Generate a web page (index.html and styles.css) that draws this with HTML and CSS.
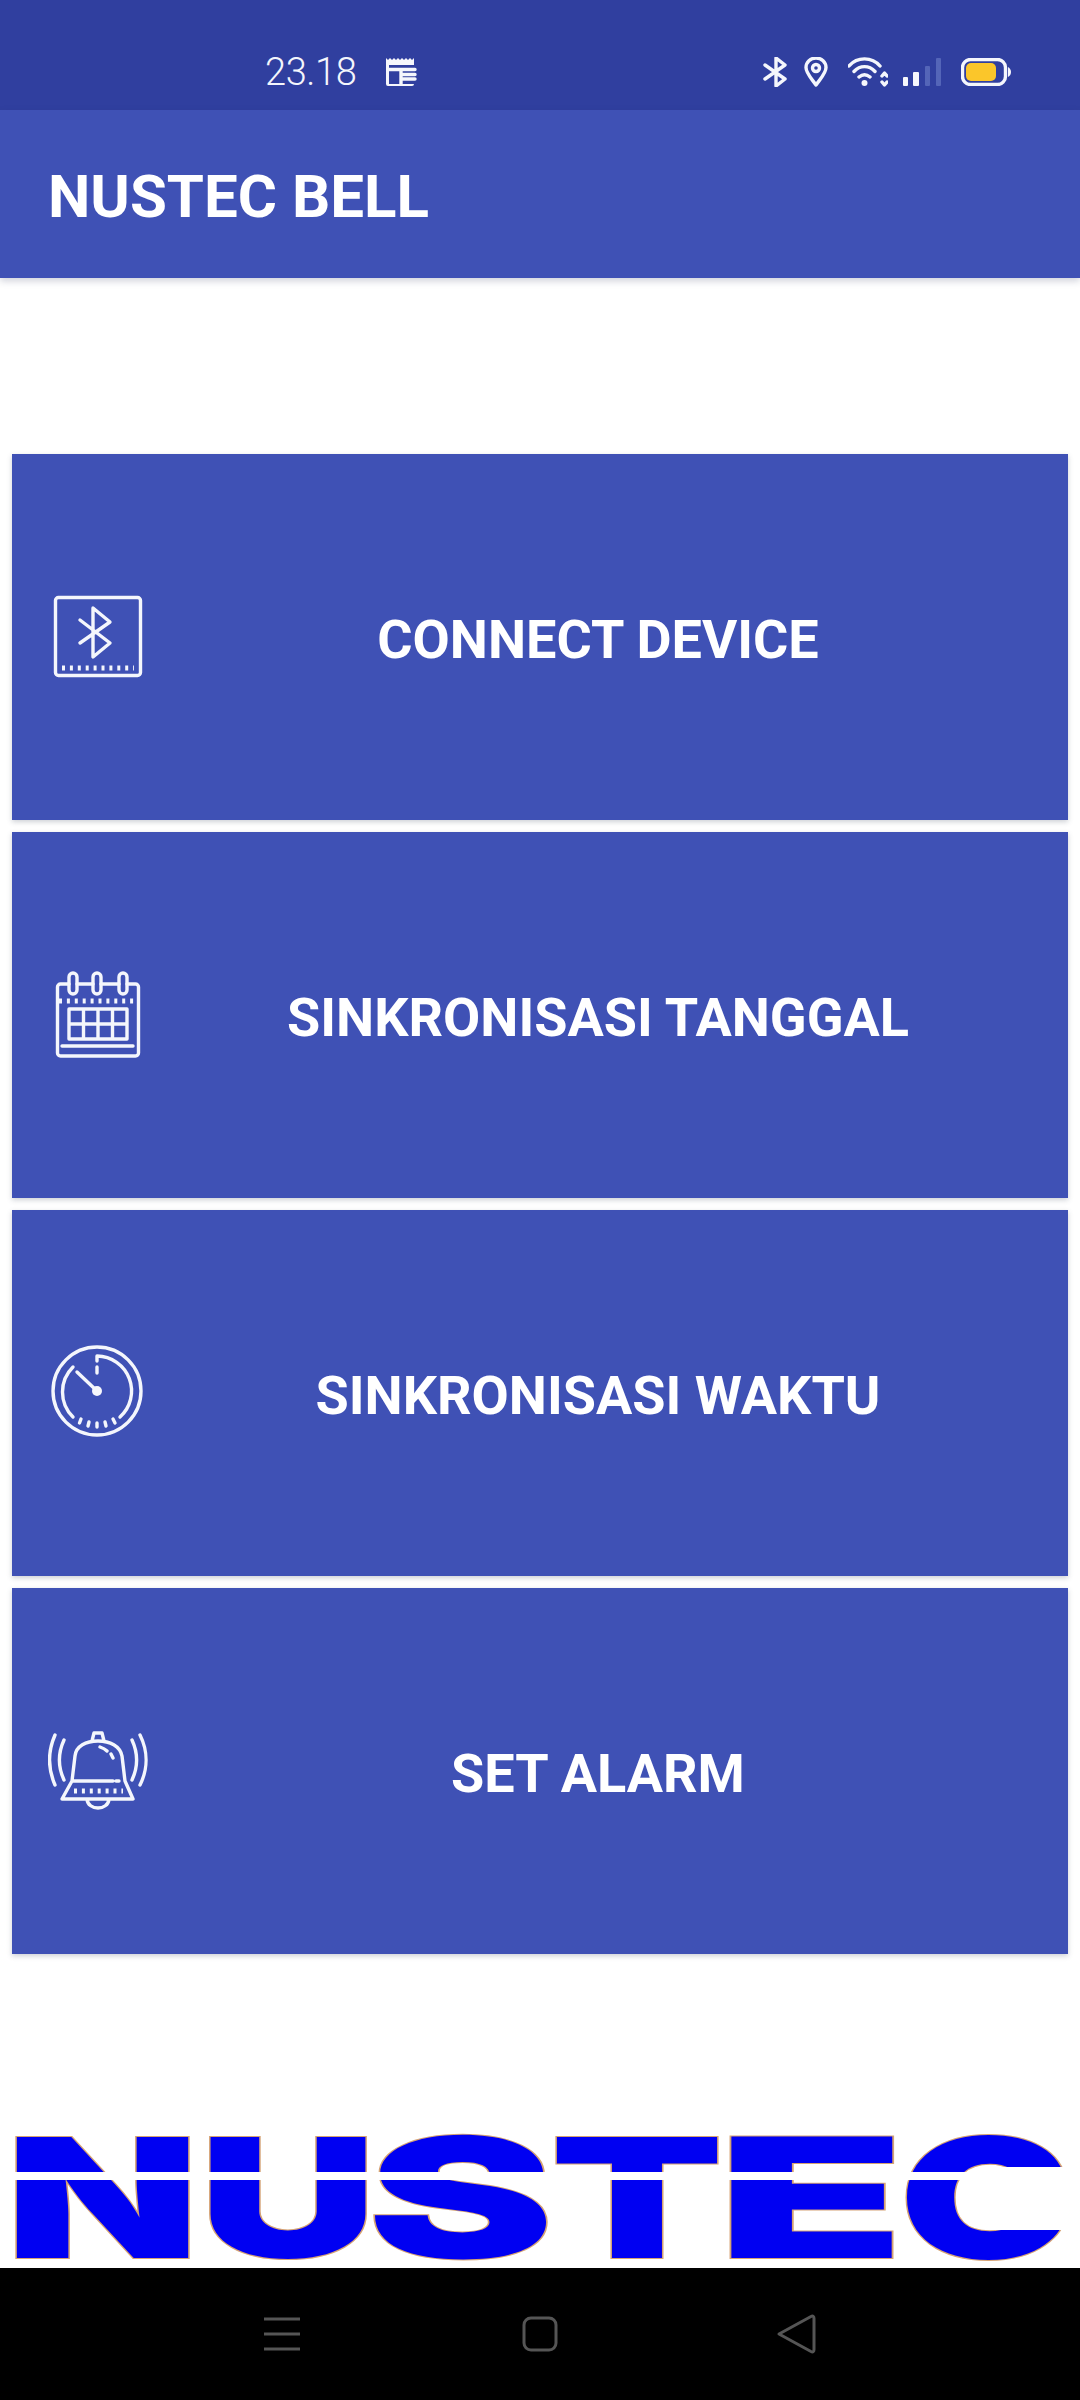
FILE: index.html
```html
<!DOCTYPE html>
<html lang="id">
<head>
<meta charset="utf-8">
<title>NUSTEC BELL</title>
<link rel="stylesheet" href="styles.css">
</head>
<body>
<div class="screen">
  <header class="status-bar">
    <span class="time">23.18</span>
    <svg class="note-icon" width="32" height="28" viewBox="0 0 32 28"><path class="solid" d="M0 0l2 2 2-2 2 2 2-2 2 2 2-2 2 2 2-2 2 2 2-2 2 2 2-2 2 2 2-2V26a2 2 0 0 1-2 2H2a2 2 0 0 1-2-2Z"/><path class="cut" d="M3 7h26v19H3Z"/><path class="line" d="M3 11.500h26M15 12v15M17 16.500h12M17 21h12" stroke-width="2.500"/></svg>
    <div class="status-icons">
      <svg width="24" height="30" viewBox="0 0 24 30"><path class="line" d="M2 8l20 14-9 7V1l9 7L2 22" stroke-width="3"/></svg>
      <svg width="24" height="30" viewBox="0 0 24 30"><path class="line" d="M12 28C7 21 2 16 2 10.500a10 9.500 0 0 1 20 0C22 16 17 21 12 28Z" stroke-width="3"/><circle class="line" cx="12" cy="11" r="3.500" stroke-width="2.500"/></svg>
      <svg width="40" height="30" viewBox="0 0 40 30"><path class="line" d="M1 9C9-.5 24-.5 32 9M6 14.500C12 8 21 8 27 14.500M11 20c3.500-3 7.500-3 11 0" stroke-width="3.600"/><circle class="solid" cx="16.500" cy="26" r="3"/><path class="line" d="M34 19l2.500-3 2.500 3M34 25l2.500 3 2.500-3" stroke-width="2"/></svg>
      <svg width="39" height="30" viewBox="0 0 39 30"><rect class="solid" x="0" y="20" width="5" height="9" rx="1"/><rect class="solid" x="10" y="15" width="6" height="14" rx="1"/><rect class="faint" x="22" y="9" width="5" height="20" rx="1"/><rect class="faint" x="33" y="1" width="5" height="28" rx="1"/></svg>
      <svg width="50" height="28" viewBox="0 0 50 28"><rect class="line" x="1.500" y="1.500" width="43" height="25" rx="8" stroke-width="3"/><rect class="fuel" x="5" y="5" width="30" height="18" rx="5"/><path class="solid" d="M47 9c2 1 3 3 3 5s-1 4-3 5Z"/></svg>
    </div>
  </header>

  <div class="app-bar"><h1 class="app-title">NUSTEC BELL</h1></div>

  <main class="content">
    <section class="menu">
      <button class="card" type="button">
        <svg class="card-icon" viewBox="0 0 100 100"><rect class="line" x="7.500" y="10.500" width="85" height="78" rx="3"/><path class="line" d="M32 33L62 56 45 70V21L62 35 32 56"/><path class="line dots" d="M14 81H86"/></svg>
        <span class="label">CONNECT DEVICE</span>
      </button>
      <button class="card" type="button">
        <svg class="card-icon" viewBox="0 0 100 100"><path class="line" d="M21 19H12.500a3 3 0 0 0-3 3V88a3 3 0 0 0 3 3H87.500a3 3 0 0 0 3-3V22a3 3 0 0 0-3-3H79M29 19H45M53 19H71"/><rect class="line" x="21" y="8" width="8" height="21" rx="4"/><rect class="line" x="45" y="8" width="8" height="21" rx="4"/><rect class="line" x="71" y="8" width="8" height="21" rx="4"/><path class="line dots" d="M11 36H89"/><path class="line" d="M21 44H79V74H21ZM21 59H79M35.500 44V74M50 44V74M64.500 44V74"/><path class="line" d="M14 81H85"/></svg>
        <span class="label">SINKRONISASI TANGGAL</span>
      </button>
      <button class="card" type="button">
        <svg class="card-icon" viewBox="0 0 100 100"><circle class="line" cx="49" cy="48" r="44"/><path class="line" d="M49 13A35 35 0 0 1 72 74M25 24A35 35 0 0 0 25 74M49 13V18M49 24V30M29 29L49 48M33 76L31.500 80M41 79L40 83M49 80V84M57 79L58 83M65 76L67 80"/><circle class="solid" cx="49" cy="48" r="5"/></svg>
        <span class="label">SINKRONISASI WAKTU</span>
      </button>
      <button class="card" type="button">
        <svg class="card-icon" viewBox="0 0 100 100"><path class="line" d="M7 14C0 30 0 48 7 64M16 19C10 32 10 46 16 59M92 14C100 30 100 48 92 64M84 19C90 32 90 46 84 59"/><path class="line" d="M44 20L46 12H54L56 20M24 60L27 35C28 25 38 20 50 20 62 20 72 25 74 35L77 60 85 78H14L24 60H65M68 60H71M39 78C40 90 60 90 61 78M52 26C55 27 57 28 59 30M63 33L65 37"/><path class="line dots" d="M26 70H75"/></svg>
        <span class="label">SET ALARM</span>
      </button>
    </section>
    <svg class="logo" viewBox="0 0 1080 140" role="img" aria-label="NUSTEC">
      <g class="logo-letters">
        <text x="5" y="130" textLength="195" lengthAdjust="spacingAndGlyphs">N</text>
        <text x="199" y="130" textLength="178" lengthAdjust="spacingAndGlyphs">U</text>
        <text x="367" y="130" textLength="187" lengthAdjust="spacingAndGlyphs">S</text>
        <text x="550" y="130" textLength="174" lengthAdjust="spacingAndGlyphs">T</text>
        <text x="717" y="130" textLength="188" lengthAdjust="spacingAndGlyphs">E</text>
        <text x="899" y="130" textLength="174" lengthAdjust="spacingAndGlyphs">C</text>
      </g>
      <rect class="logo-cut" x="0" y="44" width="1080" height="8"/>
      <rect class="logo-cut" x="985" y="39" width="95" height="63"/>
    </svg>
  </main>

  <nav class="nav-bar">
    <svg width="36" height="36" viewBox="0 0 36 36"><path class="nav-line" d="M0 3H36M0 18H36M0 33H36"/></svg>
    <svg width="36" height="36" viewBox="0 0 36 36"><rect class="nav-line" x="2" y="2" width="32" height="32" rx="7"/></svg>
    <svg width="38" height="40" viewBox="0 0 38 40"><path class="nav-line" d="M-1 20L31 2.500C33 1.500 34 2.500 34 4.500V35.500C34 37.500 33 38.500 31 37.500Z"/></svg>
  </nav>
</div>
</body>
</html>
```
FILE: styles.css
```css
* { box-sizing: border-box; }
html, body { margin: 0; padding: 0; background: #fff; }
.screen {
  width: 1080px;
  height: 2400px;
  display: flex;
  flex-direction: column;
  overflow: hidden;
  font-family: Roboto, "Liberation Sans", sans-serif;
}
.line { fill: none; stroke: #f4f6fc; stroke-width: 3.4; stroke-linecap: round; stroke-linejoin: round; }
.dots { stroke-width: 5; stroke-dasharray: 3 4.9; stroke-linecap: butt; }
.solid { fill: #f6f7fc; }
.cut { fill: #303f9f; }
.faint { fill: #5465b8; }
.fuel { fill: #fbc62a; }

.status-bar {
  height: 110px;
  flex: none;
  background: #303f9f;
  display: flex;
  align-items: center;
  padding: 34px 69px 0 265px;
  color: #f4f6fc;
}
.time {
  font-family: Roboto, sans-serif;
  font-weight: 300;
  font-size: 38px;
  line-height: 44px;
  letter-spacing: -0.4px;
  width: 121px;
}
.note-icon { display: block; }
.status-icons { margin-left: auto; display: flex; align-items: center; gap: 17px; }
.status-icons svg { display: block; }
.status-icons svg:nth-child(3) { margin-left: 3px; }
.status-icons svg:nth-child(4) { margin-left: -2px; }
.status-icons svg:nth-child(5) { margin-left: 2px; }

.app-bar {
  height: 168px;
  flex: none;
  background: #3f51b5;
  display: flex;
  align-items: center;
  padding: 6px 0 0 48px;
  box-shadow: 0 3px 7px rgba(40, 50, 90, 0.22);
  position: relative;
}
.app-title {
  margin: 0;
  font-size: 60px;
  line-height: 70px;
  font-weight: 700;
  color: #fff;
}

.content { flex: 1; display: flex; flex-direction: column; padding-top: 176px; }
.menu { display: flex; flex-direction: column; gap: 12px; padding: 0 12px; }
.card {
  height: 366px;
  border: 0;
  padding: 0 20px 0 36px;
  background: #3f51b5;
  display: flex;
  align-items: center;
  box-shadow: 0 2px 5px rgba(60, 70, 90, 0.25);
  font-family: inherit;
}
.card-icon { width: 100px; height: 100px; flex: none; display: block; }
.label {
  flex: 1;
  padding-top: 6px;
  text-align: center;
  color: #fff;
  font-size: 54px;
  line-height: 60px;
  font-weight: 700;
}
.logo { display: block; width: 1080px; height: 140px; margin-top: auto; overflow: visible; }
.logo-letters text {
  font-family: Inter, sans-serif;
  font-weight: 900;
  font-size: 167px;
  fill: #0000f2;
  stroke: #d5a274;
  stroke-width: 2px;
  paint-order: stroke;
}
.logo-cut { fill: #fff; }

.nav-bar {
  height: 132px;
  flex: none;
  background: #000;
  position: relative;
  display: flex;
  align-items: center;
  gap: 222px;
  padding: 0 0 0 264px;
}
.nav-bar svg { display: block; overflow: visible; }
.nav-line { fill: none; stroke: #555; stroke-width: 3; stroke-linejoin: round; }
```
